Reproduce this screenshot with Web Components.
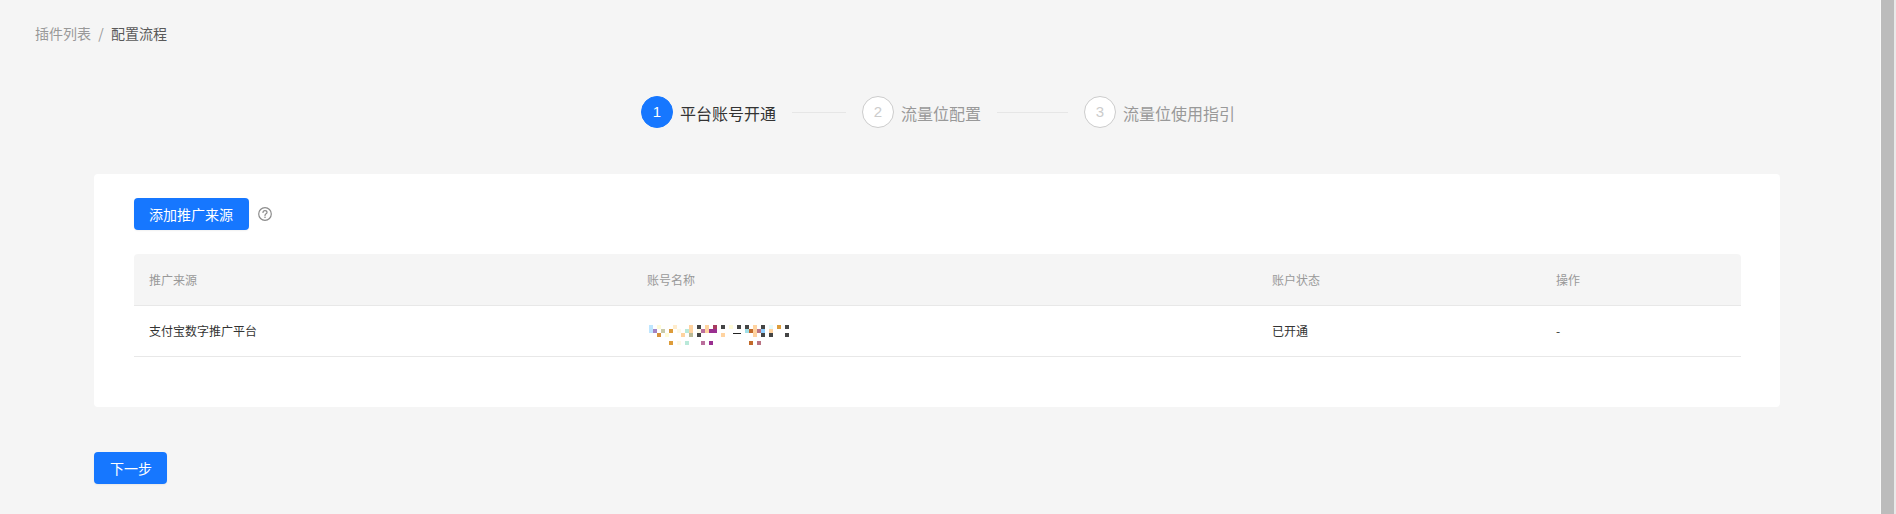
<!DOCTYPE html>
<html lang="zh"><head><meta charset="utf-8"><title>配置流程</title>
<style>
html,body{margin:0;height:514px;overflow:hidden;background:#f5f5f5;font-family:"Noto Sans CJK SC","Liberation Sans",sans-serif}
</style></head><body>
<app-shell>
  <bread-crumb></bread-crumb>
  <flow-steps>
    <flow-step n="1" active>平台账号开通</flow-step>
    <i class="l" style="width:54px"></i>
    <flow-step n="2">流量位配置</flow-step>
    <i class="l" style="width:71px"></i>
    <flow-step n="3">流量位使用指引</flow-step>
  </flow-steps>
  <source-card></source-card>
  <primary-btn style="margin:45px 0 0 94px;--pl:16px;--pr:15px">下一步</primary-btn>
</app-shell>
<script>
const sheet=(css,html)=>`<style>${css}</style>${html}`;
class Base extends HTMLElement{
  constructor(){super();this.attachShadow({mode:'open'}).innerHTML=this.markup();}
}
customElements.define('app-shell',class extends Base{markup(){return sheet(`
  :host{display:flex;height:514px}
  main{width:1880px;display:flex;flex-direction:column;align-items:flex-start}
  .bar{width:13px;background:#bcbcbc;border-left:1px solid #fafafa;border-right:2px solid #e9e9e9}
`,`<main><slot></slot></main><div class="bar"></div>`)}});
customElements.define('bread-crumb',class extends Base{markup(){return sheet(`
  :host{display:flex;padding:22px 0 0 35px;font-size:14px;line-height:22px;color:#999}
  .s{margin:0 7px 0 7px;width:6px;text-align:center;color:#999}
  .c{color:#595959}
`,`<span>插件列表</span><span class="s">/</span><span class="c">配置流程</span>`)}});
customElements.define('flow-steps',class extends Base{markup(){return sheet(`
  :host{display:flex;align-items:center;height:32px;margin:52px 0 0 641px}
  ::slotted(i){display:block;height:1px;background:#e6e6e6;margin:0 16px 0 16px}
`,`<slot></slot>`)}});
customElements.define('flow-step',class extends Base{markup(){const a=this.hasAttribute('active');return sheet(`
  :host{display:flex;align-items:center;gap:7px;font-size:16px;line-height:24px;color:${a?'#333':'#999'}}
  span{padding-top:2px}
  b{box-sizing:border-box;width:32px;height:32px;border-radius:50%;display:flex;align-items:center;justify-content:center;font-weight:400;
    font-family:"Liberation Sans",sans-serif;font-size:15px;
    background:${a?'#1677ff':'#fff'};color:${a?'#fff':'#ccc'};border:1px solid ${a?'#1677ff':'#ccc'}}
`,`<b>${this.getAttribute('n')}</b><span><slot></slot></span>`)}});
customElements.define('primary-btn',class extends Base{markup(){return sheet(`
  :host{display:inline-flex;box-sizing:border-box;height:32px;padding:0 var(--pr,16px) 0 var(--pl,15px);align-items:center;background:#1677ff;color:#fff;
    font-size:14px;border-radius:4px;box-shadow:0 1px 2px rgba(0,0,0,.06);white-space:nowrap}
`,`<slot></slot>`)}});
customElements.define('help-icon',class extends Base{markup(){return sheet(`
  :host{display:block;width:14px;height:14px}svg{display:block}
`,`<svg width="14" height="14" viewBox="0 0 14 14" fill="none" stroke="#8c8c8c" stroke-width="1.2">
<circle cx="7" cy="7" r="6.3"/><path d="M5 5.5C5 4.2 6 3.6 7 3.6S9 4.3 9 5.4C9 6.8 7 6.8 7 8.4" stroke-linecap="round"/><circle cx="7" cy="10.3" r=".8" fill="#8c8c8c" stroke="none"/></svg>`)}});
customElements.define('pixel-name',class extends Base{markup(){
  const P={l:'#bfe6ff',y:'#fffbd8',e:'#ffeccb',p:'#ffd3a0',d:'#454545',r:'#a83c60',c:'#e6fbfb',o:'#dd9c3a',v:'#a384c4',t:'#c9c9a6',w:'#fdf9e8',m:'#b9e9d9',u:'#ba6e9c',x:'#9a2f90',a:'#a2e0e8',b:'#c26a2a',s:'#ba7484',n:'#90d0ff',k:'#d9933c',g:'#b9b995'};
  const R=[[14,'0l 2y 6e 10p 12d 14p 16r 18d 20y 22d 24d 26p 28d 30c 32o 34d'],
  [18,'0l 1v 3t 5o 7w 9m 10p 12w 13u 14p 15x 16x 24a 25b 26p 27s 28n 30p'],
  [22,'2k 4y 8p 10g 12d 18p 26p 28d 30d 34d'],
  [30,'5o 7w 9m 13u 15x 25b 27s']];
  let h='';for(const[y,s]of R)for(const c of s.split(' ')){h+=`<rect x="${2+4*parseInt(c)}" y="${y}" width="4" height="4" fill="${P[c.slice(-1)]}"/>`}
  h+=`<rect x="86" y="22" width="8" height="1" fill="#222"/>`;
  return sheet(`:host{display:block;width:150px;height:40px}svg{display:block}`,`<svg width="150" height="40" viewBox="0 0 150 40">${h}</svg>`)}});
customElements.define('source-card',class extends Base{markup(){return sheet(`
  :host{display:block;box-sizing:border-box;width:1686px;height:233px;margin:46px 0 0 94px;padding:24px 39px 0 40px;background:#fff;border-radius:4px}
  .top{display:flex;align-items:center;gap:9px}
  .t{display:grid;grid-template-columns:498px 625px 284px 200px;margin-top:24px;font-size:12px;line-height:20px}
  .t>div{padding:0 15px;display:flex;align-items:center;box-sizing:border-box}
  .h{height:52px;background:#f5f5f5;color:#999;border-bottom:1px solid #e8e8e8}
  .f{border-top-left-radius:4px}.la{border-top-right-radius:4px}
  .d{height:51px;color:#333;border-bottom:1px solid #e8e8e8}
`,`<div class="top"><primary-btn>添加推广来源</primary-btn><help-icon></help-icon></div>
<div class="t">
<div class="h f">推广来源</div><div class="h">账号名称</div><div class="h">账户状态</div><div class="h la">操作</div>
<div class="d">支付宝数字推广平台</div><div class="d"><pixel-name></pixel-name></div><div class="d">已开通</div><div class="d">-</div>
</div>`)}});
</script>
</body></html>
